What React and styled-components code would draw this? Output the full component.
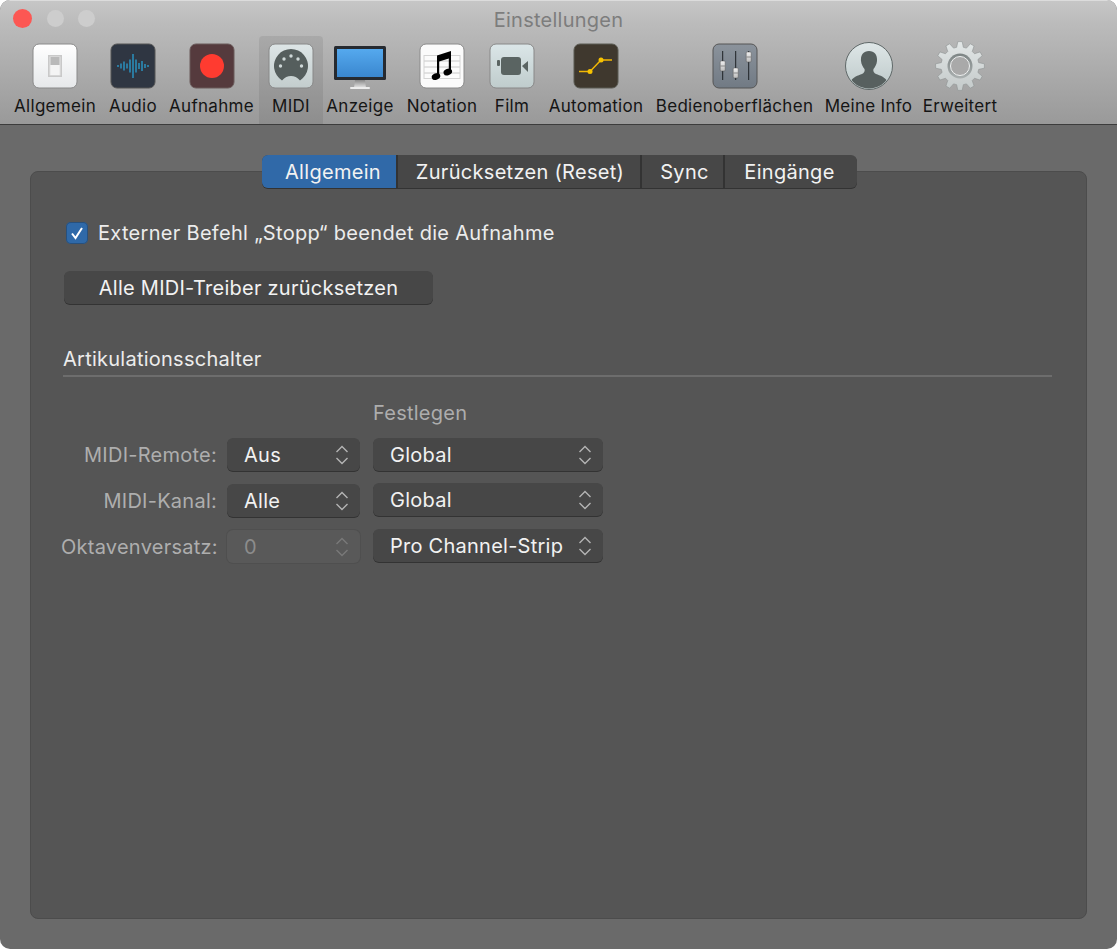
import React from "react";
import styled, { createGlobalStyle } from "styled-components";

const Global = createGlobalStyle`
  html, body { margin: 0; padding: 0; background: #fff; }
  body { font-family: Inter, "Liberation Sans", sans-serif; }
`;

const Window = styled.div`
  width: 1117px;
  height: 949px;
  border-radius: 10px;
  overflow: hidden;
  background: #6a6a6a;
  display: flex;
  flex-direction: column;
`;
const TitleBar = styled.header`
  height: 125px;
  box-sizing: border-box;
  flex: none;
  background: linear-gradient(#c6c6c6 0, #bcbcbc 20px, #999 124px);
  border-top: 1px solid #dcdcdc;
  border-bottom: 1px solid #3c3c3c;
  display: flex;
  flex-direction: column;
`;
const TitleRow = styled.div`
  height: 35px;
  flex: none;
  padding-left: 13px;
  display: flex;
  align-items: center;
  position: relative;
  gap: 14.5px;
`;
const Light = styled.span`
  width: ${(p) => (p.$red ? 19 : 17)}px;
  height: ${(p) => (p.$red ? 19 : 17)}px;
  border-radius: 50%;
  background: ${(p) => (p.$red ? "#fc5753" : "#cdcdcd")};
`;
const Title = styled.div`
  position: absolute;
  left: 0;
  right: 0;
  top: 7px;
  text-align: center;
  font-size: 20px;
  letter-spacing: 0.25px;
  line-height: 24px;
  color: #7d7d7d;
`;
const Toolbar = styled.nav`
  flex: 1;
  display: flex;
  padding-left: 8px;
`;
const ToolItem = styled.div`
  width: ${(p) => p.$w}px;
  flex: none;
  display: flex;
  flex-direction: column;
  align-items: center;
  padding-top: 4px;
  box-sizing: border-box;
  background: ${(p) => (p.$active ? "rgba(0,0,0,0.075)" : "transparent")};
  border-radius: 4px 4px 0 0;
`;
const ToolIcon = styled.svg`
  width: 52px;
  height: 52px;
  flex: none;
  display: block;
`;
const ToolLabel = styled.span`
  font-size: 17px;
  letter-spacing: 0.3px;
  line-height: 20px;
  margin-top: 4px;
  color: #151515;
  white-space: nowrap;
`;
const Content = styled.main`
  flex: 1;
  padding: 30px 30px 30px;
  display: flex;
  flex-direction: column;
  align-items: center;
  min-height: 0;
`;
const Tabs = styled.div`
  flex: none;
  height: 33px;
  box-sizing: border-box;
  display: flex;
  margin-bottom: -17px;
  margin-left: 2px;
  position: relative;
  z-index: 1;
  border-radius: 6px;
  background: #474747;
  box-shadow: 0 1px 0 #333;
`;
const Tab = styled.div`
  width: ${(p) => p.$w}px;
  padding-left: ${(p) => p.$pl || 0}px;
  padding-right: ${(p) => p.$pr || 0}px;
  display: flex;
  align-items: center;
  justify-content: center;
  font-size: 20px;
  letter-spacing: 0.3px;
  color: #f2f2f2;
  background: ${(p) => (p.$active ? "#3069a8" : "transparent")};
  border-radius: ${(p) => (p.$active ? "6px 0 0 6px" : "0")};
  border-right: ${(p) => (p.$last ? "none" : "2px solid #333")};
  box-sizing: border-box;
`;
const Panel = styled.section`
  flex: 1;
  align-self: stretch;
  background: #555;
  border: 1px solid #4c4c4c;
  border-radius: 8px;
  padding: 50px 34px 0 32px;
  box-sizing: border-box;
`;
const CheckRow = styled.label`
  display: flex;
  align-items: center;
  gap: 10px;
  margin-left: 3px;
  height: 22px;
  font-size: 20px;
  letter-spacing: 0.3px;
  color: #ececec;
`;
const CheckBox = styled.span`
  width: 22px;
  height: 22px;
  flex: none;
  border-radius: 5px;
  background: #2f69a8;
  box-shadow: inset 0 0 0 1px #28507c;
  display: flex;
  align-items: center;
  justify-content: center;
`;
const Button = styled.div`
  width: 369px;
  height: 33px;
  margin: 27px 0 0 1px;
  box-sizing: border-box;
  border-radius: 6px;
  background: #474747;
  box-shadow: 0 1px 0 #333;
  color: #f2f2f2;
  font-size: 20px;
  letter-spacing: 0.25px;
  display: flex;
  align-items: center;
  justify-content: center;
`;
const Section = styled.h2`
  margin: 42px 0 0;
  padding: 0;
  height: 31px;
  box-sizing: border-box;
  font-weight: 400;
  font-size: 20px;
  letter-spacing: 0.25px;
  line-height: 27px;
  color: #ececec;
  border-bottom: 2px solid #6d6d6d;
`;
const Form = styled.div`
  margin: 23px 0 0 -2px;
  display: grid;
  grid-template-columns: 156px 133px 233px;
  grid-template-rows: 26px repeat(3, 34px);
  column-gap: 10px;
  row-gap: 12px;
`;
const FormHead = styled.div`
  grid-column: 3;
  margin-left: 3px;
  font-size: 20px;
  letter-spacing: 0.25px;
  line-height: 26px;
  color: #adadad;
`;
const FieldLabel = styled.div`
  text-align: right;
  font-size: 20px;
  letter-spacing: 0.25px;
  line-height: 34px;
  color: #aeaeae;
  white-space: nowrap;
`;
const Select = styled.div`
  height: 33px;
  box-sizing: border-box;
  border-radius: 6px;
  padding: 0 11px 0 17px;
  display: flex;
  align-items: center;
  justify-content: space-between;
  font-size: 20px;
  letter-spacing: 0.25px;
  margin-top: ${(p) => p.$dy || 0}px;
  margin-left: ${(p) => (p.$second ? 3 : 0)}px;
  color: ${(p) => (p.$disabled ? "#8c8c8c" : "#f2f2f2")};
  background: ${(p) => (p.$disabled ? "#595959" : "#474747")};
  box-shadow: ${(p) =>
    p.$disabled ? "0 0 0 1px #4f4f4f" : "0 1px 0 #333"};
`;
const Chevrons = styled.svg`
  width: 14px;
  height: 22px;
  flex: none;
  opacity: ${(p) => (p.$disabled ? 0.35 : 1)};
`;

const Updown = ({ disabled }) => (
  <Chevrons viewBox="0 0 14 22" $disabled={disabled} fill="none" stroke="#b4b4b4" strokeWidth="1.4">
    <path d="M1.5 8 7 2.500 12.500 8" />
    <path d="M1.5 14 7 19.500 12.500 14" />
  </Chevrons>
);

function SelectBox({ value, disabled, second, dy }) {
  return (
    <Select $disabled={disabled} $second={second} $dy={dy}>
      <span>{value}</span>
      <Updown disabled={disabled} />
    </Select>
  );
}

const Tile = ({ fill, stroke = "#7c7c7c", children }) => (
  <>
    <rect x="4" y="4" width="44" height="44" rx="6" fill={fill} stroke={stroke} />
    {children}
  </>
);

const IconSwitch = () => (
  <>
    <defs>
      <linearGradient id="sw" x1="0" y1="0" x2="0" y2="1">
        <stop offset="0" stopColor="#fff" />
        <stop offset="1" stopColor="#e6e8ea" />
      </linearGradient>
    </defs>
    <Tile fill="url(#sw)" stroke="#8a8a8a">
      <rect x="19" y="15" width="14" height="22" fill="#c9c9c9" />
      <rect x="20.5" y="16.5" width="11" height="19" fill="#e4e4e4" />
      <rect x="21.5" y="17" width="9" height="8" fill="#b9b9b9" />
      <rect x="21.5" y="25" width="9" height="10" fill="#f4f4f4" />
    </Tile>
  </>
);
const IconAudio = () => {
  const bars = [[11, 1], [14, 2.5], [17, 4.5], [20, 2.5], [23, 6.5], [26, 12], [29, 6.5], [32, 3], [35, 5], [38, 2], [41, 1]];
  return (
    <Tile fill="#2f3642" stroke="#555">
      {bars.map(([x, h]) => (
        <line key={x} x1={x} x2={x} y1={26 - h} y2={26 + h} stroke="#29a9e0" strokeWidth="1.2" />
      ))}
    </Tile>
  );
};
const IconRecord = () => (
  <Tile fill="#553a3d" stroke="#6a5a5a">
    <circle cx="26" cy="26" r="12" fill="#ff3b30" />
  </Tile>
);
const IconMidi = () => (
  <>
    <defs>
      <linearGradient id="md" x1="0" y1="0" x2="0" y2="1">
        <stop offset="0" stopColor="#dde5e6" />
        <stop offset="1" stopColor="#c3cdcd" />
      </linearGradient>
    </defs>
    <Tile fill="url(#md)" stroke="#888">
      <path d="M17 40.4A17 17 0 1 1 35 40.4Q31 36 26 36Q21 36 17 40.400Z" fill="#555e5d" />
      <g fill="#cfd8d8">
        <circle cx="15.5" cy="26" r="1.7" />
        <circle cx="19" cy="19" r="1.7" />
        <circle cx="26" cy="16" r="1.7" />
        <circle cx="33" cy="19" r="1.7" />
        <circle cx="36.5" cy="26" r="1.7" />
      </g>
    </Tile>
  </>
);
const IconDisplay = () => (
  <>
    <defs>
      <linearGradient id="dp" x1="0" y1="0" x2="0" y2="1">
        <stop offset="0" stopColor="#55a9ee" />
        <stop offset="1" stopColor="#3a87cf" />
      </linearGradient>
      <linearGradient id="st" x1="0" y1="0" x2="0" y2="1">
        <stop offset="0" stopColor="#888" />
        <stop offset="1" stopColor="#e8e8e8" />
      </linearGradient>
    </defs>
    <rect x="0" y="6" width="52" height="34" rx="1.5" fill="#262a30" />
    <rect x="3" y="9" width="46" height="28" fill="url(#dp)" />
    <path d="M21 40h10l1 8H20z" fill="url(#st)" />
    <rect x="16" y="47" width="20" height="2" rx="1" fill="#ececec" />
  </>
);
const IconNotation = () => (
  <Tile fill="#fbfbfb" stroke="#8a8a8a">
    <g stroke="#c8c8c8" strokeWidth="1">
      <line x1="8" x2="44" y1="21" y2="21" />
      <line x1="8" x2="44" y1="27" y2="27" />
      <line x1="8" x2="44" y1="33" y2="33" />
    </g>
    <rect x="8" y="15.5" width="36" height="23" fill="none" stroke="#d4d4d4" />
    <path d="M21 15.500 35 11v20.500h-2.200V18.400l-9.600 3V36H21Z" fill="#000" />
    <ellipse cx="20" cy="36.500" rx="4.400" ry="3.200" transform="rotate(-22 20 36.500)" fill="#000" />
    <ellipse cx="31.800" cy="32" rx="4.400" ry="3.200" transform="rotate(-22 31.800 32)" fill="#000" />
  </Tile>
);
const IconFilm = () => (
  <>
    <defs>
      <linearGradient id="fm" x1="0" y1="0" x2="0" y2="1">
        <stop offset="0" stopColor="#dbe6e8" />
        <stop offset="1" stopColor="#bfcccc" />
      </linearGradient>
    </defs>
    <Tile fill="url(#fm)" stroke="#888">
      <rect x="11" y="20" width="3" height="6" rx="1" fill="#5a6462" />
      <rect x="15" y="17" width="20" height="18" rx="3" fill="#5a6462" />
      <path d="M36 26 42 21v11z" fill="#5a6462" />
    </Tile>
  </>
);
const IconAutomation = () => (
  <Tile fill="#3f382e" stroke="#5a5a52">
    <path d="M9 31.500h11l11-11.500h11" fill="none" stroke="#f2b705" strokeWidth="1.4" />
    <circle cx="20" cy="31.500" r="2.500" fill="#f7c200" />
    <circle cx="31" cy="20" r="2.500" fill="#f7c200" />
  </Tile>
);
const IconSliders = () => {
  const s = [[13.7, 26], [26.7, 33], [39.7, 17]];
  return (
    <>
      <defs>
        <linearGradient id="sl" x1="0" y1="0" x2="0" y2="1">
          <stop offset="0" stopColor="#8b939c" />
          <stop offset="1" stopColor="#717a84" />
        </linearGradient>
        <linearGradient id="hd" x1="0" y1="0" x2="0" y2="1">
          <stop offset="0" stopColor="#f0f0f0" />
          <stop offset="1" stopColor="#bdbdbd" />
        </linearGradient>
      </defs>
      <Tile fill="url(#sl)" stroke="#555">
        {s.map(([x, y]) => (
          <g key={x}>
            <line x1={x} x2={x} y1="11" y2="40" stroke="#1e2226" strokeWidth="1" />
            <rect x={x - 2.5} y={y - 5} width="5" height="10" rx="1" fill="url(#hd)" stroke="#555" strokeWidth="0.5" />
            <line x1={x - 2.5} x2={x + 2.5} y1={y} y2={y} stroke="#888" strokeWidth="1" />
          </g>
        ))}
      </Tile>
    </>
  );
};
const IconPerson = () => (
  <>
    <defs>
      <linearGradient id="pn" x1="0" y1="0" x2="0" y2="1">
        <stop offset="0" stopColor="#dfe7e8" />
        <stop offset="1" stopColor="#bcc8c8" />
      </linearGradient>
      <clipPath id="pc">
        <circle cx="26" cy="26" r="22.5" />
      </clipPath>
    </defs>
    <circle cx="26" cy="26" r="23.500" fill="url(#pn)" stroke="#5f6868" strokeWidth="1" />
    <path
      clipPath="url(#pc)"
      d="M26 11c6 0 8.500 4.500 8 10-.3 3.500-2 6-3.500 8-.5 2 0 4 2.500 5 4 1.500 9 3 11 7v10H8V41c2-4 7-5.500 11-7 2.500-1 3-3 2.500-5-1.500-2-3.200-4.500-3.500-8-.5-5.500 2-10 8-10Z"
      fill="#57605f"
    />
  </>
);
function gearPath(cx, cy, rOut, rIn, teeth) {
  const pts = [];
  const step = (Math.PI * 2) / teeth;
  for (let i = 0; i < teeth; i++) {
    const a = i * step - Math.PI / 2;
    const p = (r, d) => [cx + r * Math.cos(a + d), cy + r * Math.sin(a + d)];
    pts.push(p(rIn, -step * 0.34), p(rOut, -step * 0.17), p(rOut, step * 0.17), p(rIn, step * 0.34));
  }
  return "M" + pts.map((q) => q[0].toFixed(2) + " " + q[1].toFixed(2)).join("L") + "Z";
}
const IconGear = () => (
  <>
    <defs>
      <linearGradient id="gr" x1="0" y1="0" x2="0" y2="1">
        <stop offset="0" stopColor="#e2e6e6" />
        <stop offset="1" stopColor="#c4caca" />
      </linearGradient>
      <linearGradient id="gi" x1="0" y1="0" x2="0" y2="1">
        <stop offset="0" stopColor="#7d8484" />
        <stop offset="1" stopColor="#aab0b0" />
      </linearGradient>
    </defs>
    <path d={gearPath(26, 26, 24.5, 19, 12)} fill="url(#gr)" stroke="#8d9292" strokeWidth="0.6" strokeLinejoin="round" />
    <circle cx="26" cy="26" r="12.500" fill="url(#gi)" />
    <circle cx="26" cy="26" r="9.500" fill="#a9a9a9" stroke="#eef0f0" strokeWidth="1" />
  </>
);

const items = [
  ["Allgemein", 94, IconSwitch],
  ["Audio", 62, IconAudio],
  ["Aufnahme", 95, IconRecord],
  ["MIDI", 64, IconMidi],
  ["Anzeige", 74, IconDisplay],
  ["Notation", 90, IconNotation],
  ["Film", 50, IconFilm],
  ["Automation", 118, IconAutomation],
  ["Bedienoberflächen", 159, IconSliders],
  ["Meine Info", 109, IconPerson],
  ["Erweitert", 74, IconGear],
];

const tabs = [
  ["Allgemein", 136, 8, 0],
  ["Zurücksetzen (Reset)", 244, 2, 0],
  ["Sync", 83, 4, 0],
  ["Eingänge", 132, 0, 3],
];

export default function App() {
  return (
    <>
      <Global />
      <Window>
        <TitleBar>
          <TitleRow>
            <Light $red />
            <Light />
            <Light />
            <Title>Einstellungen</Title>
          </TitleRow>
          <Toolbar>
            {items.map(([label, w, Icon]) => (
              <ToolItem key={label} $w={w} $active={label === "MIDI"}>
                <ToolIcon viewBox="0 0 52 52">
                  <Icon />
                </ToolIcon>
                <ToolLabel>{label}</ToolLabel>
              </ToolItem>
            ))}
          </Toolbar>
        </TitleBar>
        <Content>
          <Tabs>
            {tabs.map(([label, w, pl, pr], i) => (
              <Tab key={label} $w={w} $pl={pl} $pr={pr} $active={i === 0} $last={i === tabs.length - 1}>
                {label}
              </Tab>
            ))}
          </Tabs>
          <Panel>
            <CheckRow>
              <CheckBox>
                <svg width="14" height="14" viewBox="0 0 14 14" fill="none" stroke="#fff" strokeWidth="2">
                  <path d="M2 7.500 5.500 12 12 2" />
                </svg>
              </CheckBox>
              Externer Befehl „Stopp“ beendet die Aufnahme
            </CheckRow>
            <Button>Alle MIDI-Treiber zurücksetzen</Button>
            <Section>Artikulationsschalter</Section>
            <Form>
              <FormHead>Festlegen</FormHead>
              <FieldLabel>MIDI-Remote:</FieldLabel>
              <SelectBox value="Aus" />
              <SelectBox value="Global" second />
              <FieldLabel>MIDI-Kanal:</FieldLabel>
              <SelectBox value="Alle" />
              <SelectBox value="Global" second dy={-1} />
              <FieldLabel>Oktavenversatz:</FieldLabel>
              <SelectBox value="0" disabled />
              <SelectBox value="Pro Channel-Strip" second dy={-1} />
            </Form>
          </Panel>
        </Content>
      </Window>
    </>
  );
}
